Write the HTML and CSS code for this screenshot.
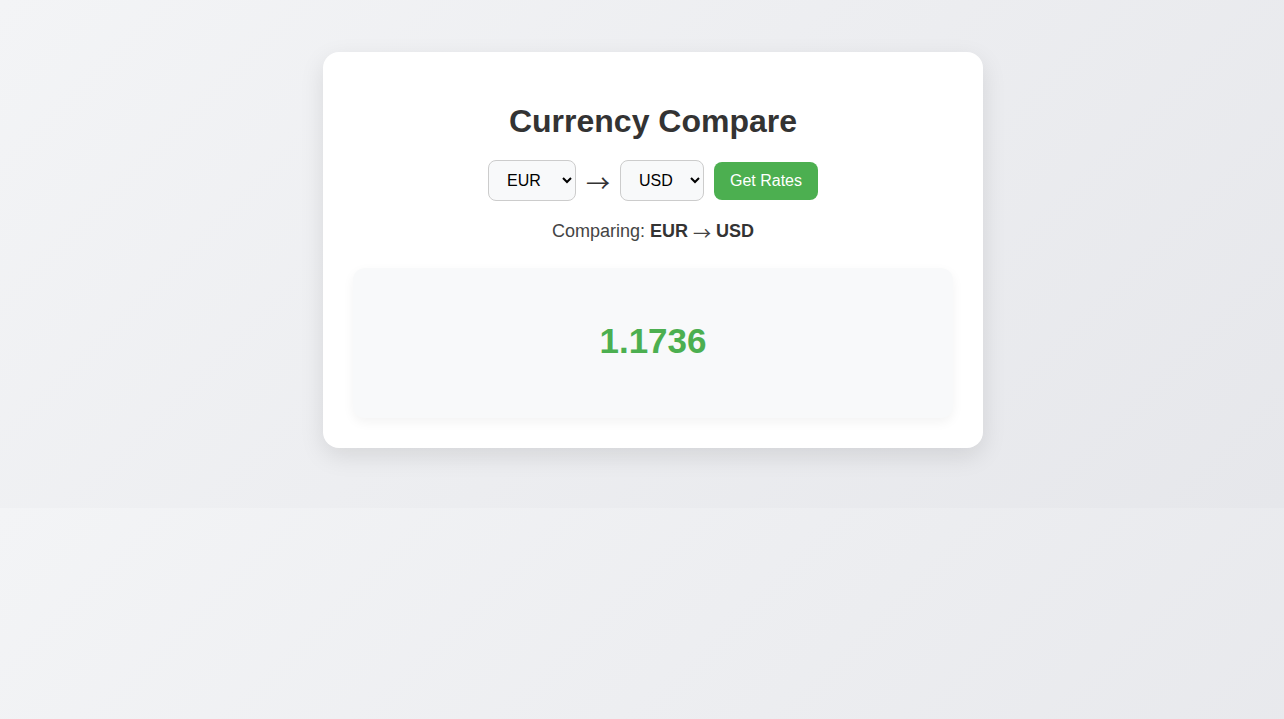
FILE: index.html
```html
<!DOCTYPE html>
<html lang="en">
<head>
<meta charset="utf-8">
<title>Currency Compare</title>
<link rel="stylesheet" href="styles.css">
</head>
<body>
<div class="card">
  <h1 class="title">Currency Compare</h1>
  <div class="controls">
    <select class="currency currency-from">
      <option>EUR</option>
      <option>USD</option>
      <option>GBP</option>
    </select>
    <span class="arrow">&rarr;</span>
    <select class="currency currency-to">
      <option>USD</option>
      <option>EUR</option>
      <option>GBP</option>
    </select>
    <button class="btn">Get Rates</button>
  </div>
  <p class="comparing">Comparing: <strong>EUR</strong> <span class="small-arrow">&rarr;</span> <strong>USD</strong></p>
  <div class="result">
    <span class="rate">1.1736</span>
  </div>
</div>
</body>
</html>
```

FILE: styles.css
```css
body {
  margin: 0;
  padding: 52px 0 60px 22px;
  font-family: "Liberation Sans", Arial, sans-serif;
  background: linear-gradient(135deg, #f3f4f6 0%, #e6e7eb 100%);
  color: #333;
}

.card {
  width: 600px;
  margin: 0 auto;
  background: #fff;
  border-radius: 16px;
  padding: 30px;
  box-shadow: 0 8px 24px rgba(0, 0, 0, 0.1);
  text-align: center;
}

.title {
  font-size: 32px;
  font-weight: bold;
  color: #333;
  margin: 21px 0 20px;
}

.controls {
  display: flex;
  justify-content: center;
  align-items: center;
  gap: 10px;
}

.currency {
  font-family: "Liberation Sans", Arial, sans-serif;
  font-size: 16px;
  padding: 10px 6px 10px 14px;
  border: 1px solid #ccc;
  border-radius: 8px;
  background: #f8f9fa;
  color: #000;
  box-sizing: border-box;
  height: 41px;
}

.currency-from {
  width: 88px;
}

.currency-to {
  width: 84px;
}

.arrow {
  font-family: "Noto Sans CJK JP", "DejaVu Sans", sans-serif;
  font-size: 24px;
  line-height: 1;
  color: #333;
  padding-top: 2px;
}

.small-arrow {
  font-family: "Noto Sans CJK JP", "DejaVu Sans", sans-serif;
  font-weight: normal;
  line-height: 1;
  vertical-align: top;
  position: relative;
  top: 2px;
}

.btn {
  font-family: "Liberation Sans", Arial, sans-serif;
  font-size: 16px;
  padding: 10px 16px;
  border: none;
  border-radius: 8px;
  background: #4caf50;
  color: #fff;
}

.comparing {
  font-size: 18px;
  line-height: 21px;
  color: #444;
  margin: 20px 0 26px;
}

.comparing strong {
  color: #333;
}

.result {
  background: #f8f9fa;
  border-radius: 12px;
  height: 150px;
  display: flex;
  align-items: center;
  justify-content: center;
  box-shadow: 0 4px 12px rgba(0, 0, 0, 0.05);
}

.rate {
  font-size: 35px;
  font-weight: bold;
  color: #4caf50;
  padding-bottom: 4px;
}
```
